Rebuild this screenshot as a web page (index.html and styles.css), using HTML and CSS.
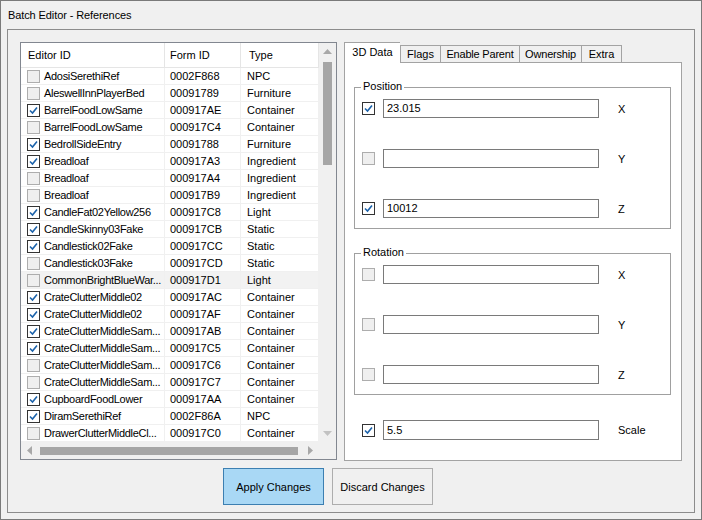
FILE: index.html
```html
<!DOCTYPE html>
<html>
<head>
<meta charset="utf-8">
<link rel="stylesheet" href="styles.css">
</head>
<body>
<div class="window">
  <div class="title">Batch Editor - References</div>
  <div class="frame">
    <div class="main">
      <div class="list">
        <div class="table">
          <div class="thead">
            <div class="c c1 h1">Editor ID</div>
            <div class="c c2">Form ID</div>
            <div class="c c3 h3">Type</div>
          </div>
          <div class="row"><div class="c c1"><span class="cb"></span>AdosiSerethiRef</div><div class="c c2">0002F868</div><div class="c c3">NPC</div></div>
          <div class="row"><div class="c c1"><span class="cb"></span>AleswellInnPlayerBed</div><div class="c c2">00091789</div><div class="c c3">Furniture</div></div>
          <div class="row"><div class="c c1"><span class="cb on"><svg viewBox="0 0 11 11" width="11" height="11"><path d="M2 5.5 L4.5 8 L9 2.5" fill="none" stroke="#1b62aa" stroke-width="1.6"/></svg></span>BarrelFoodLowSame</div><div class="c c2">000917AE</div><div class="c c3">Container</div></div>
          <div class="row"><div class="c c1"><span class="cb"></span>BarrelFoodLowSame</div><div class="c c2">000917C4</div><div class="c c3">Container</div></div>
          <div class="row"><div class="c c1"><span class="cb on"><svg viewBox="0 0 11 11" width="11" height="11"><path d="M2 5.5 L4.5 8 L9 2.5" fill="none" stroke="#1b62aa" stroke-width="1.6"/></svg></span>BedrollSideEntry</div><div class="c c2">00091788</div><div class="c c3">Furniture</div></div>
          <div class="row"><div class="c c1"><span class="cb on"><svg viewBox="0 0 11 11" width="11" height="11"><path d="M2 5.5 L4.5 8 L9 2.5" fill="none" stroke="#1b62aa" stroke-width="1.6"/></svg></span>Breadloaf</div><div class="c c2">000917A3</div><div class="c c3">Ingredient</div></div>
          <div class="row"><div class="c c1"><span class="cb"></span>Breadloaf</div><div class="c c2">000917A4</div><div class="c c3">Ingredient</div></div>
          <div class="row"><div class="c c1"><span class="cb"></span>Breadloaf</div><div class="c c2">000917B9</div><div class="c c3">Ingredient</div></div>
          <div class="row"><div class="c c1"><span class="cb on"><svg viewBox="0 0 11 11" width="11" height="11"><path d="M2 5.5 L4.5 8 L9 2.5" fill="none" stroke="#1b62aa" stroke-width="1.6"/></svg></span>CandleFat02Yellow256</div><div class="c c2">000917C8</div><div class="c c3">Light</div></div>
          <div class="row"><div class="c c1"><span class="cb on"><svg viewBox="0 0 11 11" width="11" height="11"><path d="M2 5.5 L4.5 8 L9 2.5" fill="none" stroke="#1b62aa" stroke-width="1.6"/></svg></span>CandleSkinny03Fake</div><div class="c c2">000917CB</div><div class="c c3">Static</div></div>
          <div class="row"><div class="c c1"><span class="cb on"><svg viewBox="0 0 11 11" width="11" height="11"><path d="M2 5.5 L4.5 8 L9 2.5" fill="none" stroke="#1b62aa" stroke-width="1.6"/></svg></span>Candlestick02Fake</div><div class="c c2">000917CC</div><div class="c c3">Static</div></div>
          <div class="row"><div class="c c1"><span class="cb"></span>Candlestick03Fake</div><div class="c c2">000917CD</div><div class="c c3">Static</div></div>
          <div class="row hover"><div class="c c1"><span class="cb"></span>CommonBrightBlueWar...</div><div class="c c2">000917D1</div><div class="c c3">Light</div></div>
          <div class="row"><div class="c c1"><span class="cb on"><svg viewBox="0 0 11 11" width="11" height="11"><path d="M2 5.5 L4.5 8 L9 2.5" fill="none" stroke="#1b62aa" stroke-width="1.6"/></svg></span>CrateClutterMiddle02</div><div class="c c2">000917AC</div><div class="c c3">Container</div></div>
          <div class="row"><div class="c c1"><span class="cb on"><svg viewBox="0 0 11 11" width="11" height="11"><path d="M2 5.5 L4.5 8 L9 2.5" fill="none" stroke="#1b62aa" stroke-width="1.6"/></svg></span>CrateClutterMiddle02</div><div class="c c2">000917AF</div><div class="c c3">Container</div></div>
          <div class="row"><div class="c c1"><span class="cb on"><svg viewBox="0 0 11 11" width="11" height="11"><path d="M2 5.5 L4.5 8 L9 2.5" fill="none" stroke="#1b62aa" stroke-width="1.6"/></svg></span>CrateClutterMiddleSam...</div><div class="c c2">000917AB</div><div class="c c3">Container</div></div>
          <div class="row"><div class="c c1"><span class="cb on"><svg viewBox="0 0 11 11" width="11" height="11"><path d="M2 5.5 L4.5 8 L9 2.5" fill="none" stroke="#1b62aa" stroke-width="1.6"/></svg></span>CrateClutterMiddleSam...</div><div class="c c2">000917C5</div><div class="c c3">Container</div></div>
          <div class="row"><div class="c c1"><span class="cb"></span>CrateClutterMiddleSam...</div><div class="c c2">000917C6</div><div class="c c3">Container</div></div>
          <div class="row"><div class="c c1"><span class="cb"></span>CrateClutterMiddleSam...</div><div class="c c2">000917C7</div><div class="c c3">Container</div></div>
          <div class="row"><div class="c c1"><span class="cb on"><svg viewBox="0 0 11 11" width="11" height="11"><path d="M2 5.5 L4.5 8 L9 2.5" fill="none" stroke="#1b62aa" stroke-width="1.6"/></svg></span>CupboardFoodLower</div><div class="c c2">000917AA</div><div class="c c3">Container</div></div>
          <div class="row"><div class="c c1"><span class="cb on"><svg viewBox="0 0 11 11" width="11" height="11"><path d="M2 5.5 L4.5 8 L9 2.5" fill="none" stroke="#1b62aa" stroke-width="1.6"/></svg></span>DiramSerethiRef</div><div class="c c2">0002F86A</div><div class="c c3">NPC</div></div>
          <div class="row"><div class="c c1"><span class="cb"></span>DrawerClutterMiddleCl...</div><div class="c c2">000917C0</div><div class="c c3">Container</div></div>
        </div>
        <div class="vscroll">
          <div class="sbtn"><svg width="9" height="5" viewBox="0 0 9 5"><path d="M0 5 L4.5 0 L9 5 Z" fill="#a8a8a8"/></svg></div>
          <div class="vthumb"></div>
          <div class="spacer"></div>
          <div class="sbtn"><svg width="9" height="5" viewBox="0 0 9 5"><path d="M0 0 L4.5 5 L9 0 Z" fill="#c2c2c2"/></svg></div>
        </div>
        <div class="hscroll">
          <div class="hbtn"><svg width="5" height="9" viewBox="0 0 5 9"><path d="M5 0 L0 4.5 L5 9 Z" fill="#a8a8a8"/></svg></div>
          <div class="hthumb"></div>
          <div class="hbtn"><svg width="5" height="9" viewBox="0 0 5 9"><path d="M0 0 L5 4.5 L0 9 Z" fill="#a8a8a8"/></svg></div>
        </div>
        <div class="corner"></div>
      </div>

      <div class="tabs">
        <div class="tabstrip">
          <div class="tab t1 sel">3D Data</div>
          <div class="tab t2">Flags</div>
          <div class="tab t3">Enable Parent</div>
          <div class="tab t4">Ownership</div>
          <div class="tab t5">Extra</div>
        </div>
        <div class="panel">
          <div class="group">
            <div class="gtitle">Position</div>
            <div class="frow"><span class="cb on"><svg viewBox="0 0 11 11" width="11" height="11"><path d="M2 5.5 L4.5 8 L9 2.5" fill="none" stroke="#1b62aa" stroke-width="1.6"/></svg></span><div class="tbox">23.015</div><span class="flabel">X</span></div>
            <div class="frow"><span class="cb"></span><div class="tbox"></div><span class="flabel">Y</span></div>
            <div class="frow"><span class="cb on"><svg viewBox="0 0 11 11" width="11" height="11"><path d="M2 5.5 L4.5 8 L9 2.5" fill="none" stroke="#1b62aa" stroke-width="1.6"/></svg></span><div class="tbox">10012</div><span class="flabel">Z</span></div>
          </div>
          <div class="group rot">
            <div class="gtitle">Rotation</div>
            <div class="frow"><span class="cb"></span><div class="tbox"></div><span class="flabel">X</span></div>
            <div class="frow"><span class="cb"></span><div class="tbox"></div><span class="flabel">Y</span></div>
            <div class="frow"><span class="cb"></span><div class="tbox"></div><span class="flabel">Z</span></div>
          </div>
          <div class="frow scale"><span class="cb on"><svg viewBox="0 0 11 11" width="11" height="11"><path d="M2 5.5 L4.5 8 L9 2.5" fill="none" stroke="#1b62aa" stroke-width="1.6"/></svg></span><div class="tbox tall">5.5</div><span class="flabel">Scale</span></div>
        </div>
      </div>
    </div>
    <div class="buttons">
      <div class="btn primary">Apply Changes</div>
      <div class="btn">Discard Changes</div>
    </div>
  </div>
</div>
</body>
</html>
```
FILE: styles.css
```css
* { box-sizing: border-box; }
html, body { margin: 0; padding: 0; }
body {
  width: 702px;
  height: 520px;
  background: #f0f0f0;
  font-family: "Liberation Sans", Arial, sans-serif;
  font-size: 11px;
  color: #000;
  overflow: hidden;
}
.window {
  width: 702px;
  height: 520px;
  border: 1px solid #7a7a7a;
  background: #f0f0f0;
}
.title {
  height: 28px;
  padding: 8px 0 0 7px;
  line-height: 13px;
  letter-spacing: -0.1px;
}
.frame {
  margin-left: 6px;
  width: 688px;
  height: 484px;
  border: 1px solid #8c8c8c;
  padding: 12px 0 0 12px;
}
.main {
  display: flex;
  gap: 7px;
  height: 419px;
}
.list {
  width: 317px;
  height: 418px;
  border: 1px solid #828790;
  background: #fff;
  display: grid;
  grid-template-columns: 298px 17px;
  grid-template-rows: 399px 17px;
}
.table { overflow: hidden; }
.thead, .row { display: flex; }
.thead { height: 25px; }
.thead .c {
  height: 25px;
  line-height: 24px;
  border-right: 1px solid #e5e5e5;
  border-bottom: 1px solid #e5e5e5;
}
.row { height: 17px; }
.row .c {
  height: 17px;
  line-height: 17px;
  border-right: 1px solid #f0f0f0;
  border-bottom: 1px solid #f0f0f0;
}
.row.hover { background: #f2f2f2; }
.c { white-space: nowrap; overflow: hidden; }
.c1 { width: 144px; padding-left: 6px; display: flex; align-items: center; }
.row .c1 { letter-spacing: -0.3px; }
.c2 { width: 76px; padding-left: 5px; }
.c3 { width: 78px; padding-left: 6px; }
.thead .h1 { padding-left: 7px; }
.thead .h3 { padding-left: 8px; }
.cb {
  flex: none;
  width: 13px;
  height: 13px;
  border: 1px solid #adadad;
  background: #efefef;
  margin-right: 4px;
  display: inline-flex;
  align-items: center;
  justify-content: center;
}
.cb.on { border-color: #333; background: #fff; }

.vscroll {
  background: #f0f0f0;
  display: flex;
  flex-direction: column;
  grid-row: 1;
  grid-column: 2;
}
.sbtn {
  height: 17px;
  display: flex;
  align-items: center;
  justify-content: center;
  flex: none;
}
.vthumb {
  margin: 2px 4px 0 4px;
  height: 103px;
  background: #a6a6a6;
  flex: none;
}
.spacer { flex: 1; }
.hscroll {
  background: #f0f0f0;
  display: flex;
  align-items: center;
  grid-row: 2;
  grid-column: 1;
}
.hbtn {
  width: 17px;
  height: 17px;
  display: flex;
  align-items: center;
  justify-content: center;
  flex: none;
}
.hthumb {
  margin-left: 2px;
  width: 258px;
  height: 8px;
  background: #a6a6a6;
}
.hscroll .hbtn:last-child { margin-left: auto; }
.corner { background: #f0f0f0; grid-row: 2; grid-column: 2; }

.tabs { width: 338px; display: flex; flex-direction: column; }
.tabstrip {
  height: 20px;
  display: flex;
  align-items: flex-end;
}
.tab {
  height: 17px;
  line-height: 16px;
  text-align: center;
  border: 1px solid #a3a3a3;
  border-right: none;
  border-bottom: none;
  background: #f0f0f0;
  white-space: nowrap;
}
.tab.t5 { border-right: 1px solid #a3a3a3; }
.tab.sel {
  height: 21px;
  line-height: 19px;
  margin-bottom: -1px;
  background: #fff;
  position: relative;
  z-index: 1;
}
.t1 { width: 56px; }
.t2 { width: 40px; }
.t3 { width: 79px; letter-spacing: -0.2px; }
.t4 { width: 62px; letter-spacing: -0.2px; }
.t5 { width: 41px; }
.panel {
  height: 399px;
  border: 1px solid #a3a3a3;
  background: #fff;
  padding: 24px 10px 0 9px;
}
.group {
  position: relative;
  border: 1px solid #a0a0a0;
  padding: 11px 0 10px 7px;
  display: flex;
  flex-direction: column;
  gap: 31px;
}
.group.rot { margin-top: 24px; }
.gtitle {
  position: absolute;
  top: -8px;
  left: 6px;
  padding: 0 2px;
  background: #fff;
  line-height: 13px;
}
.frow {
  display: flex;
  align-items: center;
  height: 19px;
}
.frow .cb { margin-right: 8px; }
.tbox {
  width: 216px;
  height: 19px;
  border: 1px solid #7a7a7a;
  padding-left: 3px;
  line-height: 17px;
  background: #fff;
}
.tbox.tall { height: 20px; line-height: 18px; }
.flabel { margin-left: 19px; }
.frow.scale { margin-top: 25px; padding-left: 8px; height: 20px; }

.buttons {
  display: flex;
  gap: 8px;
  margin-top: 7px;
  padding-left: 203px;
}
.btn {
  width: 101px;
  height: 37px;
  border: 1px solid #adadad;
  background: #f0f0f0;
  display: flex;
  align-items: center;
  justify-content: center;
}
.btn.primary { background: #a9d8f5; border-color: #3c7fb1; }
```
